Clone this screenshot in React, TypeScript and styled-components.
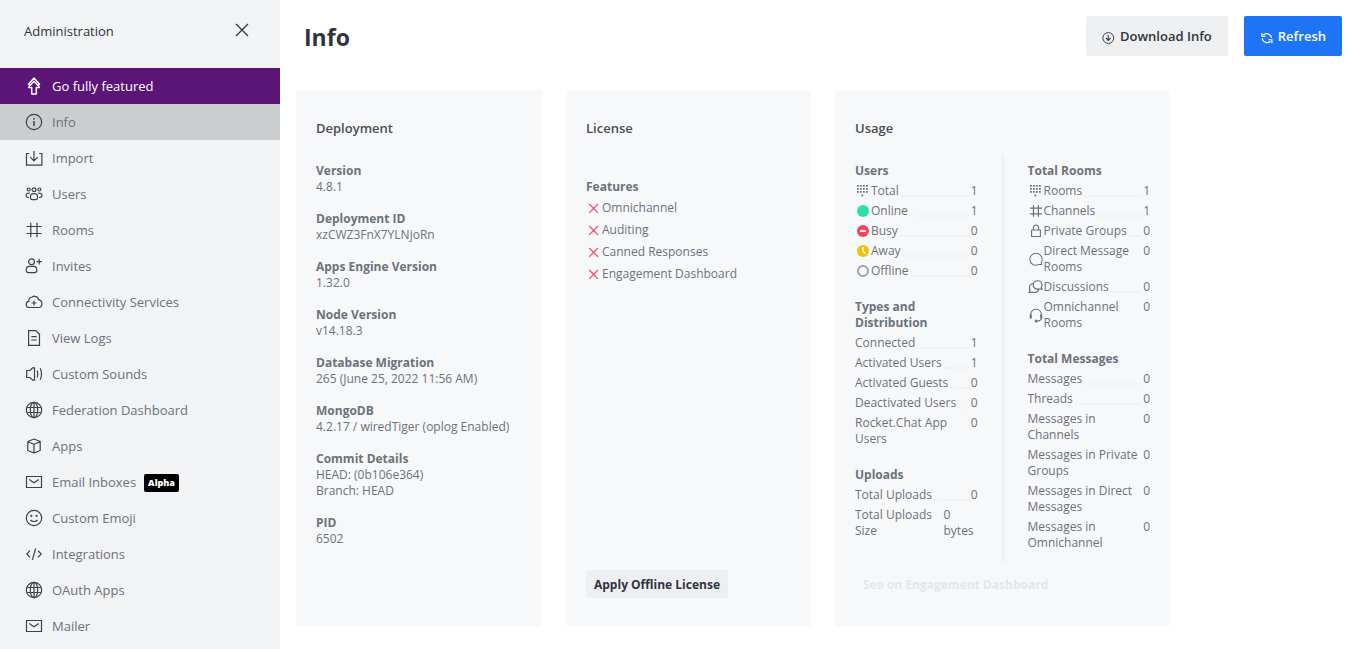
import React from 'react';
import styled, { createGlobalStyle, css } from 'styled-components';

const GlobalStyle = createGlobalStyle`
  * { box-sizing: border-box; }
  body {
    margin: 0;
    font-family: 'Open Sans', 'Noto Sans', sans-serif;
    background: #ffffff;
    color: #2f343d;
  }
  h1, h2, h3, p, ul, dl, dd { margin: 0; padding: 0; }
  ul { list-style: none; }
  button { font-family: inherit; cursor: pointer; }
`;

const Page = styled.div`
  display: flex;
  height: 100vh;
  overflow: hidden;
`;

const Sidebar = styled.aside`
  flex: 0 0 280px;
  background: #f2f3f5;
  overflow: hidden;
`;

const SidebarHeader = styled.header`
  display: flex;
  align-items: flex-start;
  justify-content: space-between;
  height: 68px;
  padding: 20px 28px 0 24px;
`;

const SidebarTitle = styled.h2`
  font-size: 13px;
  line-height: 22px;
  font-weight: 400;
  color: #2f343d;
`;

const CloseButton = styled.button`
  display: flex;
  border: 0;
  padding: 0;
  background: none;
  color: #2f343d;
`;

const NavLink = styled.a<{ $variant?: 'upgrade' | 'active' }>`
  display: flex;
  align-items: center;
  gap: 8px;
  height: 36px;
  padding: 0 24px;
  font-size: 13px;
  line-height: 20px;
  color: #6c727a;
  text-decoration: none;
  svg { color: #3c414a; }
  ${({ $variant }) => $variant === 'active' && css`background: #cbced1;`}
  ${({ $variant }) => $variant === 'upgrade' && css`
    background: #5b1577;
    color: #ffffff;
    font-weight: 500;
    svg { color: #ffffff; }
  `}
`;

const Tag = styled.span`
  margin-top: 2px;
  padding: 0 4px;
  border-radius: 2px;
  background: #000000;
  color: #ffffff;
  font-size: 9px;
  line-height: 18px;
  font-weight: 800;
`;

const Main = styled.main`
  flex: 1;
  min-width: 0;
  overflow: hidden;
`;

const PageHeader = styled.header`
  display: flex;
  align-items: center;
  justify-content: space-between;
  padding: 16px 24px;
`;

const Title = styled.h1`
  padding-top: 2px;
  font-size: 23px;
  line-height: 32px;
  font-weight: 700;
`;

const Actions = styled.div`
  display: flex;
  gap: 16px;
`;

const ActionButton = styled.button<{ $primary?: boolean }>`
  display: flex;
  align-items: center;
  gap: 4px;
  height: 40px;
  padding: 0 16px;
  border: 0;
  border-radius: 2px;
  font-size: 13px;
  line-height: 20px;
  font-weight: 600;
  background: ${({ $primary }) => ($primary ? '#1d74f5' : '#eeeff1')};
  color: ${({ $primary }) => ($primary ? '#ffffff' : '#2f343d')};
  svg { margin-top: 3px; }
`;

const Cards = styled.div`
  display: grid;
  grid-template-columns: minmax(0, 246px) minmax(0, 245px) minmax(0, 335px);
  gap: 24px;
  padding: 18px 16px;
`;

const Card = styled.section`
  display: flex;
  flex-direction: column;
  min-height: 536px;
  padding: 28px 20px;
  border-radius: 2px;
  background: #f7f8fa;
  color: #6c727a;
  font-size: 12px;
  line-height: 16px;
`;

const CardTitle = styled.h2`
  margin-bottom: 16px;
  font-size: 13px;
  line-height: 20px;
  font-weight: 600;
  color: #4a4d55;
`;

const CardBody = styled.div`
  display: flex;
  flex: 1;
`;

const Column = styled.div<{ $gap: number }>`
  display: flex;
  flex: 1 1 0;
  min-width: 0;
  flex-direction: column;
  gap: ${({ $gap }) => $gap}px;
  padding: 9px 0 11px;
`;

const Divider = styled.div`
  flex: 0 0 2px;
  margin: 0 24px;
  background: #eeeff1;
`;

const Heading = styled.h3`
  font-size: 12px;
  line-height: 16px;
  font-weight: 700;
`;

const Lines = styled.p`
  white-space: pre-line;
`;

const Features = styled.section`
  padding-top: 16px;
`;

const FeatureList = styled.ul`
  padding-top: 2px;
`;

const Feature = styled.li`
  display: flex;
  align-items: center;
  height: 22px;
  svg { color: #f5455c; }
`;

const Row = styled.li`
  display: flex;
  margin-top: 4px;
`;

const RowIcon = styled.span`
  display: flex;
  align-items: center;
`;

const RowLabel = styled.span`
  white-space: pre;
`;

const Dots = styled.span`
  flex: 1;
  height: 14px;
  margin: 0 2px;
  border-bottom: 2px dotted #eeeff1;
`;

const Spacer = styled.span`
  flex: 1;
`;

const RowValue = styled.span<{ $wide?: boolean }>`
  white-space: pre;
  ${({ $wide }) => $wide && css`flex: 0 0 34px;`}
`;

const CardFooter = styled.footer`
  display: flex;
  padding-top: 8px;
`;

const SmallButton = styled.button`
  height: 28px;
  padding: 2px 8px 0;
  border: 0;
  border-radius: 2px;
  background: #eeeff1;
  color: #2f343d;
  font-size: 12px;
  line-height: 16px;
  font-weight: 700;
  &:disabled {
    background: none;
    color: #e4e7ea;
    cursor: default;
  }
`;

const shapes = {
  upgrade: (
    <g strokeWidth="1.5" strokeLinejoin="round">
      <path d="M7.700 18v-6.500H4.700L5.800 9 4.500 8.200 10 2l5.500 6.200L14.200 9l1.100 2.500h-3V18z" />
      <path d="M5.300 10.300 10 5.300l4.700 5" />
    </g>
  ),
  info: (
    <>
      <circle cx="10" cy="10" r="7.700" />
      <path d="M10 9v5" strokeWidth="1.500" />
      <circle cx="10" cy="6.800" r=".9" fill="currentColor" stroke="none" />
    </>
  ),
  import: <path d="M5.200 5.500H2.500v11.600h15.400V5.500h-2.700M10 3v9.700M6.300 9.200l3.700 3.700 3.700-3.700" />,
  users: (
    <g strokeWidth="1.200">
      <circle cx="4.600" cy="5.500" r="1.500" />
      <circle cx="10" cy="5.700" r="1.900" />
      <circle cx="15.400" cy="5.500" r="1.500" />
      <path d="M6.500 12.200c0-1.700 1.500-2.500 3.500-2.500s3.500.8 3.500 2.500v1.500c0 1.200-.6 1.900-1.800 1.900H8.300c-1.200 0-1.800-.7-1.800-1.900z" />
      <path d="M5.800 9.100C3.500 8.800 2.100 9.800 2.100 11.500v.6c0 .9.800 1.400 2 1.400h1M14.200 9.100c2.300-.3 3.700.7 3.700 2.400v.6c0 .9-.8 1.400-2 1.400h-1" />
    </g>
  ),
  hash: <path d="M6.800 2.800v14.400M13 2.800v14.400M2.600 6.500h15M2.600 13.500h15" />,
  invite: (
    <>
      <circle cx="7.500" cy="5.800" r="2.900" />
      <path d="M2.200 14c0-2.300 1.100-3.700 3-3.700h4.600c1.900 0 3 1.400 3 3.700 0 1.800-.8 2.600-2.300 2.600h-6c-1.500 0-2.300-.8-2.300-2.600zM15.200 3v5.400M12.500 5.700h5.400" />
    </>
  ),
  cloud: (
    <path d="M5.500 15.500c-2 0-3.300-1.300-3.300-3.100 0-1.600 1-2.800 2.600-3C4.600 6.500 6.300 5 8.300 5c.8-.7 1.700-.9 2.500-.7 2 .1 3.400 1.300 3.700 3.400 2.200.4 3.400 2.100 3.400 4.300 0 2.100-1.300 3.500-3.300 3.500zM10 8.500v5M7.500 11h5" />
  ),
  logs: <path d="M4.600 2.600h7.200l3.700 3.600v11.200H4.600zM7.300 8.600h5.400M7.300 12h5.400" />,
  sound: (
    <path d="M6 6.500H2.700v7H6l2.600 2.700h1.900V3.800H8.600L6 6.500M13.200 6.500c.8 2.200.8 4.800 0 7M16.200 4.300c1.600 3.500 1.600 7.900 0 11.400" />
  ),
  globe: (
    <>
      <circle cx="10" cy="10" r="7.700" />
      <ellipse cx="10" cy="10" rx="3.700" ry="7.700" />
      <path d="M10 2.300v15.400M3.200 7.500h13.600M3.200 12.500h13.600" />
    </>
  ),
  cube: <path d="m10 3 6.200 2.500v9L10 17l-6.200-2.500v-9zM3.800 5.700 10 8.300l6.200-2.600M10 8.300V17" strokeLinejoin="round" />,
  mail: <path d="M2.500 4.500h15v11h-15zM5.300 7.500 10 10.700l4.700-3.200" />,
  emoji: (
    <>
      <circle cx="10" cy="10" r="7.700" />
      <circle cx="7.400" cy="7.800" r="1.100" fill="currentColor" stroke="none" />
      <circle cx="12.600" cy="7.800" r="1.100" fill="currentColor" stroke="none" />
      <path d="M6.500 12c1.700 2 5.300 2 7 0" />
    </>
  ),
  code: <path d="M6 6.700 2.800 10 6 13.300M14 6.700l3.200 3.300-3.200 3.300M11.600 4.500 8.400 15.800" />,
  close: <path d="m4 4 12 12M16 4 4 16" />,
  cross: <path d="m4 5 11 11M15 5 4 16" strokeWidth="1.400" />,
  download: (
    <>
      <circle cx="9" cy="10" r="7.800" strokeWidth="1.300" />
      <path d="M9 5.500v8" stroke="#2b7fc4" strokeWidth="2" />
      <path d="m5.800 9.900 3.200 3.400 3.200-3.400" strokeWidth="1.700" />
    </>
  ),
  refresh: (
    <g strokeWidth="1.700">
      <path d="M4.500 6c3.500-4 11-2.500 12 4M15 14.600c-3.500 3.700-10.500 2.300-12-4" />
      <path d="M2.700 2.700v5h5M17 17.500v-5h-5" />
    </g>
  ),
  dialpad: (
    <g fill="currentColor" stroke="none">
      {[2.500, 6.250, 10, 13.750].flatMap((x) => [2.500, 6.250, 10].map((y) => (
        <rect key={`${x}-${y}`} x={x} y={y} width="2.200" height="2.200" />
      )))}
      <rect x="8.100" y="14.500" width="2.200" height="2.200" />
    </g>
  ),
  online: <circle cx="10" cy="10" r="7.500" fill="#2de0a5" stroke="none" />,
  busy: (
    <>
      <circle cx="10" cy="10" r="7.500" fill="#f5455c" stroke="none" />
      <path d="M6.300 10h7.400" stroke="#ffffff" strokeWidth="2.600" />
    </>
  ),
  away: (
    <>
      <circle cx="10" cy="10" r="7.500" fill="#f3be08" stroke="none" />
      <path d="M10 5v5.300l3.200 3" stroke="#ffffff" strokeWidth="2" />
    </>
  ),
  offline: <circle cx="10" cy="10" r="6.300" stroke="#9ea2a8" strokeWidth="2.400" />,
  lock: <path d="M4.500 8.800h11v8h-11zM6.800 8.800V5.700c0-4.300 6.400-4.300 6.400 0v3.100" strokeLinejoin="round" strokeWidth="1.400" />,
  balloon: <path d="M17.500 16.800h-4.200C7.500 19.600 2.300 15.600 2.300 10.500c0-4.300 3.300-7.700 7.700-7.700s7.700 3.400 7.700 7.700c0 1.600-.4 3-1.300 4.200z" strokeLinejoin="round" strokeWidth="1.300" />,
  discussion: (
    <path d="M6.500 7.500c0-3 2.400-5.300 5.500-5.300s5.500 2.300 5.500 5.300c0 1.200-.3 2.200-.9 3.100l1 2.100h-5.100c-3.500.2-6-2.200-6-5.200zM6 5.600c-2.500.8-4.200 2.700-4.200 5.200 0 1.100.3 2.100.8 2.900l-1.300 3.100h5.500c3 .4 5.500-.8 6.600-3" />
  ),
  headset: (
    <>
      <path d="M3.300 10V9.500C3.300 .5 16.700 .5 16.700 9.500v.5M17 14c-.5 2-2 3.300-4.500 3.600" strokeWidth="1.400" />
      <path d="M3.500 9.300v5M16.500 9.300v5" strokeWidth="2.600" />
      <circle cx="10.300" cy="17.500" r="2" fill="currentColor" stroke="none" />
    </>
  ),
};

type IconName = keyof typeof shapes;

const Svg = styled.svg`
  display: block;
  flex: none;
  fill: none;
  stroke: currentColor;
`;

const Icon = ({ name, size = 20 }: { name: IconName; size?: number }) => (
  <Svg width={size} height={size} viewBox="0 0 20 20" strokeWidth={size === 20 ? 1.2 : 1.5} aria-hidden="true">
    {shapes[name]}
  </Svg>
);

type NavEntry = { icon: IconName; label: string; variant?: 'upgrade' | 'active'; tag?: string };

const navigation: NavEntry[] = [
  { icon: 'upgrade', label: 'Go fully featured', variant: 'upgrade' },
  { icon: 'info', label: 'Info', variant: 'active' },
  { icon: 'import', label: 'Import' },
  { icon: 'users', label: 'Users' },
  { icon: 'hash', label: 'Rooms' },
  { icon: 'invite', label: 'Invites' },
  { icon: 'cloud', label: 'Connectivity Services' },
  { icon: 'logs', label: 'View Logs' },
  { icon: 'sound', label: 'Custom Sounds' },
  { icon: 'globe', label: 'Federation Dashboard' },
  { icon: 'cube', label: 'Apps' },
  { icon: 'mail', label: 'Email Inboxes', tag: 'Alpha' },
  { icon: 'emoji', label: 'Custom Emoji' },
  { icon: 'code', label: 'Integrations' },
  { icon: 'globe', label: 'OAuth Apps' },
  { icon: 'mail', label: 'Mailer' },
];

const deployment = [
  ['Version', '4.8.1'],
  ['Deployment ID', 'xzCWZ3FnX7YLNjoRn'],
  ['Apps Engine Version', '1.32.0'],
  ['Node Version', 'v14.18.3'],
  ['Database Migration', '265 (June 25, 2022 11:56 AM)'],
  ['MongoDB', '4.2.17 / wiredTiger (oplog Enabled)'],
  ['Commit Details', 'HEAD: (0b106e364)\nBranch: HEAD'],
  ['PID', '6502'],
];

const features = ['Omnichannel', 'Auditing', 'Canned Responses', 'Engagement Dashboard'];

type Stat = { label: string; value: string; icon?: IconName };
type StatGroup = { title: string; stats: Stat[] };

const usageLeft: StatGroup[] = [
  {
    title: 'Users',
    stats: [
      { icon: 'dialpad', label: 'Total', value: '1' },
      { icon: 'online', label: 'Online', value: '1' },
      { icon: 'busy', label: 'Busy', value: '0' },
      { icon: 'away', label: 'Away', value: '0' },
      { icon: 'offline', label: 'Offline', value: '0' },
    ],
  },
  {
    title: 'Types and\nDistribution',
    stats: [
      { label: 'Connected', value: '1' },
      { label: 'Activated Users', value: '1' },
      { label: 'Activated Guests', value: '0' },
      { label: 'Deactivated Users', value: '0' },
      { label: 'Rocket.Chat App\nUsers', value: '0' },
    ],
  },
  {
    title: 'Uploads',
    stats: [
      { label: 'Total Uploads', value: '0' },
      { label: 'Total Uploads\nSize', value: '0\nbytes' },
    ],
  },
];

const usageRight: StatGroup[] = [
  {
    title: 'Total Rooms',
    stats: [
      { icon: 'dialpad', label: 'Rooms', value: '1' },
      { icon: 'hash', label: 'Channels', value: '1' },
      { icon: 'lock', label: 'Private Groups', value: '0' },
      { icon: 'balloon', label: 'Direct Message\nRooms', value: '0' },
      { icon: 'discussion', label: 'Discussions', value: '0' },
      { icon: 'headset', label: 'Omnichannel\nRooms', value: '0' },
    ],
  },
  {
    title: 'Total Messages',
    stats: [
      { label: 'Messages', value: '0' },
      { label: 'Threads', value: '0' },
      { label: 'Messages in\nChannels', value: '0' },
      { label: 'Messages in Private\nGroups', value: '0' },
      { label: 'Messages in Direct\nMessages', value: '0' },
      { label: 'Messages in\nOmnichannel', value: '0' },
    ],
  },
];

const GroupHeading = styled(Heading)`
  white-space: pre-line;
`;

const StatColumn = ({ groups }: { groups: StatGroup[] }) => (
  <Column $gap={20}>
    {groups.map(({ title, stats }) => (
      <section key={title}>
        <GroupHeading>{title}</GroupHeading>
        <ul>
          {stats.map(({ icon, label, value }) => (
            <Row key={label}>
              {icon && <RowIcon><Icon name={icon} size={16} /></RowIcon>}
              <RowLabel>{label}</RowLabel>
              {label.includes('\n') ? <Spacer /> : <Dots />}
              <RowValue $wide={value.includes('\n')}>{value}</RowValue>
            </Row>
          ))}
        </ul>
      </section>
    ))}
  </Column>
);

export default function App() {
  return (
    <Page>
      <GlobalStyle />
      <Sidebar>
        <SidebarHeader>
          <SidebarTitle>Administration</SidebarTitle>
          <CloseButton type="button" aria-label="Close"><Icon name="close" /></CloseButton>
        </SidebarHeader>
        <nav>
          {navigation.map(({ icon, label, variant, tag }) => (
            <NavLink key={label} href="#" $variant={variant}>
              <Icon name={icon} />
              <span>{label}</span>
              {tag && <Tag>{tag}</Tag>}
            </NavLink>
          ))}
        </nav>
      </Sidebar>
      <Main>
        <PageHeader>
          <Title>Info</Title>
          <Actions>
            <ActionButton type="button"><Icon name="download" size={14} />Download Info</ActionButton>
            <ActionButton type="button" $primary><Icon name="refresh" size={14} />Refresh</ActionButton>
          </Actions>
        </PageHeader>
        <Cards>
          <Card>
            <CardTitle>Deployment</CardTitle>
            <CardBody>
              <Column $gap={16}>
                {deployment.map(([name, value]) => (
                  <section key={name}>
                    <Heading>{name}</Heading>
                    <Lines>{value}</Lines>
                  </section>
                ))}
              </Column>
            </CardBody>
          </Card>
          <Card>
            <CardTitle>License</CardTitle>
            <CardBody>
              <Column $gap={16}>
                <Features>
                  <Heading>Features</Heading>
                  <FeatureList>
                    {features.map((feature) => (
                      <Feature key={feature}><Icon name="cross" size={16} />{feature}</Feature>
                    ))}
                  </FeatureList>
                </Features>
              </Column>
            </CardBody>
            <CardFooter><SmallButton type="button">Apply Offline License</SmallButton></CardFooter>
          </Card>
          <Card>
            <CardTitle>Usage</CardTitle>
            <CardBody>
              <StatColumn groups={usageLeft} />
              <Divider />
              <StatColumn groups={usageRight} />
            </CardBody>
            <CardFooter><SmallButton type="button" disabled>See on Engagement Dashboard</SmallButton></CardFooter>
          </Card>
        </Cards>
      </Main>
    </Page>
  );
}
